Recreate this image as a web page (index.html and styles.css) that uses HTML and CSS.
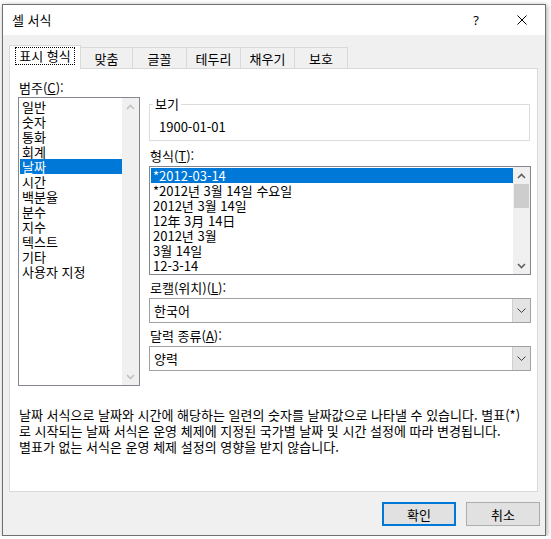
FILE: index.html
```html
<!DOCTYPE html>
<html lang="ko">
<head>
<meta charset="utf-8">
<title>셀 서식</title>
<link rel="stylesheet" href="styles.css">
</head>
<body>
<div class="window">
  <div class="titlebar">
    <span class="title">셀 서식</span>
    <span class="tb-btn help">?</span>
    <span class="tb-btn close"><svg width="10" height="10" viewBox="0 0 10 10"><path d="M0.5 0.5L9.5 9.5M9.5 0.5L0.5 9.5" fill="none" stroke="#000" stroke-width="1"/></svg></span>
  </div>
  <div class="tabs">
    <div class="tab active"><span class="focus">표시 형식</span></div>
    <div class="tab tab-align">맞춤</div>
    <div class="tab tab-font">글꼴</div>
    <div class="tab tab-border">테두리</div>
    <div class="tab tab-fill">채우기</div>
    <div class="tab tab-protect">보호</div>
  </div>
  <div class="panel">
    <div class="cols">
      <div class="left">
        <div class="label">범주(<u>C</u>):</div>
        <div class="listbox cat">
          <div class="items">
            <div class="item">일반</div>
            <div class="item">숫자</div>
            <div class="item">통화</div>
            <div class="item">회계</div>
            <div class="item sel">날짜</div>
            <div class="item">시간</div>
            <div class="item">백분율</div>
            <div class="item">분수</div>
            <div class="item">지수</div>
            <div class="item">텍스트</div>
            <div class="item">기타</div>
            <div class="item">사용자 지정</div>
          </div>
          <div class="scrollbar disabled">
            <div class="arrow"><svg width="9" height="6" viewBox="0 0 9 6"><path d="M1 5L4.5 1.5L8 5" fill="none" stroke="currentColor" stroke-width="1.6"/></svg></div>
            <div class="spacer"></div>
            <div class="arrow"><svg width="9" height="6" viewBox="0 0 9 6"><path d="M1 1L4.5 4.5L8 1" fill="none" stroke="currentColor" stroke-width="1.6"/></svg></div>
          </div>
        </div>
      </div>
      <div class="right">
        <fieldset class="sample">
          <legend>보기</legend>
          <div class="sample-value">1900-01-01</div>
        </fieldset>
        <div class="label fmt-label">형식(<u>T</u>):</div>
        <div class="listbox fmt">
          <div class="items">
            <div class="item sel">*2012-03-14</div>
            <div class="item">*2012년 3월 14일 수요일</div>
            <div class="item">2012년 3월 14일</div>
            <div class="item">12年 3月 14日</div>
            <div class="item">2012년 3월</div>
            <div class="item">3월 14일</div>
            <div class="item">12-3-14</div>
          </div>
          <div class="scrollbar">
            <div class="arrow"><svg width="9" height="6" viewBox="0 0 9 6"><path d="M1 5L4.5 1.5L8 5" fill="none" stroke="currentColor" stroke-width="1.6"/></svg></div>
            <div class="thumb"></div>
            <div class="spacer"></div>
            <div class="arrow"><svg width="9" height="6" viewBox="0 0 9 6"><path d="M1 1L4.5 4.5L8 1" fill="none" stroke="currentColor" stroke-width="1.6"/></svg></div>
          </div>
        </div>
        <div class="label combo-label">로캘(위치)(<u>L</u>):</div>
        <div class="combo">
          <span class="combo-text">한국어</span>
          <span class="combo-btn"><svg width="9" height="5" viewBox="0 0 9 5"><path d="M0.5 0.5L4.5 4.5L8.5 0.5" fill="none" stroke="#404040" stroke-width="1"/></svg></span>
        </div>
        <div class="label combo-label">달력 종류(<u>A</u>):</div>
        <div class="combo">
          <span class="combo-text">양력</span>
          <span class="combo-btn"><svg width="9" height="5" viewBox="0 0 9 5"><path d="M0.5 0.5L4.5 4.5L8.5 0.5" fill="none" stroke="#404040" stroke-width="1"/></svg></span>
        </div>
      </div>
    </div>
    <p class="desc">날짜 서식으로 날짜와 시간에 해당하는 일련의 숫자를 날짜값으로 나타낼 수 있습니다. 별표(*)<br>로 시작되는 날짜 서식은 운영 체제에 지정된 국가별 날짜 및 시간 설정에 따라 변경됩니다.<br>별표가 없는 서식은 운영 체제 설정의 영향을 받지 않습니다.</p>
  </div>
  <div class="buttons">
    <button class="btn default">확인</button>
    <button class="btn">취소</button>
  </div>
</div>
</body>
</html>
```
FILE: styles.css
```css
body {
  margin: 0;
  background: #fff;
  font-family: "Noto Sans CJK KR", "Noto Sans", sans-serif;
  font-size: 13px;
  color: #000;
}

.window {
  box-sizing: border-box;
  width: 544px;
  height: 532px;
  margin: 4px 0 0 2px;
  border: 1px solid #707070;
  background: #f0f0f0;
  box-shadow: 1px 1px 5px rgba(0, 0, 0, 0.35);
  display: flex;
  flex-direction: column;
}

.titlebar {
  height: 30px;
  flex: none;
  background: #fff;
  display: flex;
  align-items: center;
  padding-left: 9px;
}

.title {
  flex: 1;
  line-height: 16px;
}

.tb-btn {
  width: 46px;
  height: 30px;
  display: flex;
  align-items: center;
  justify-content: center;
}

.help {
  font-family: "Noto Sans", sans-serif;
  font-size: 13px;
}

.tabs {
  display: flex;
  align-items: flex-end;
  height: 23px;
  flex: none;
  margin: 10px 0 0 6px;
}

.tab {
  box-sizing: border-box;
  height: 21px;
  border-top: 1px solid #d9d9d9;
  border-right: 1px solid #d9d9d9;
  display: flex;
  align-items: center;
  justify-content: center;
  background: #f0f0f0;
  line-height: 15px;
}

.tab.active {
  width: 72px;
  height: 24px;
  margin-bottom: -1px;
  background: #fff;
  border: 1px solid #d9d9d9;
  border-bottom: none;
  position: relative;
  z-index: 1;
  align-items: flex-start;
  padding-top: 1px;
}

.tab-align { width: 52px; }
.tab-font { width: 54px; }
.tab-border { width: 54px; }
.tab-fill { width: 54px; }
.tab-protect { width: 53px; }

.focus {
  border: 1px dotted #000;
  padding: 0 3px;
  line-height: 16px;
}

.panel {
  box-sizing: border-box;
  width: 529px;
  height: 424px;
  flex: none;
  margin-left: 6px;
  background: #fff;
  border: 1px solid #d9d9d9;
  padding: 11px 0 0 8px;
}

.cols {
  display: grid;
  grid-template-columns: 122px 382px;
  column-gap: 9px;
  align-items: start;
}

.label {
  line-height: 15px;
  height: 15px;
  padding-left: 1px;
  white-space: nowrap;
}

.listbox {
  box-sizing: border-box;
  border: 1px solid #828790;
  background: #fff;
  display: flex;
}

.cat {
  height: 289px;
  margin-top: 2px;
}

.items {
  flex: 1;
  padding: 1px 0 0 1px;
}

.item {
  line-height: 15px;
  height: 15px;
  padding-left: 2px;
  white-space: nowrap;
}

.item.sel {
  background: #0078d7;
  color: #fff;
}

.scrollbar {
  width: 17px;
  background: #f0f0f0;
  display: flex;
  flex-direction: column;
  color: #606060;
}

.scrollbar.disabled {
  color: #c2c2c2;
}

.arrow {
  height: 17px;
  display: flex;
  align-items: center;
  justify-content: center;
}

.spacer {
  flex: 1;
}

.thumb {
  height: 24px;
  margin: 0 1px;
  background: #cdcdcd;
}

.right {
  padding-top: 17px;
  display: flex;
  flex-direction: column;
}

.sample {
  box-sizing: border-box;
  width: 381px;
  min-width: 0;
  margin: 0;
  padding: 0;
  border: 1px solid #dcdcdc;
}

.sample legend {
  padding: 0 2px;
  margin-left: 3px;
  line-height: 14px;
}

.sample-value {
  line-height: 15px;
  padding: 8px 0 6px 9px;
}

.fmt-label {
  margin-top: 7px;
}

.fmt {
  height: 109px;
  margin-top: 3px;
}

.combo-label {
  margin-top: 5px;
}

.combo {
  box-sizing: border-box;
  height: 25px;
  margin-top: 3px;
  border: 1px solid #a0a0a0;
  background: #fff;
  display: flex;
}

.combo-text {
  flex: 1;
  line-height: 23px;
  padding-left: 4px;
}

.combo-btn {
  width: 17px;
  background: #e3e3e3;
  border-left: 1px solid #cfcfcf;
  display: flex;
  align-items: center;
  justify-content: center;
}

.desc {
  margin: 21px 0 0;
  padding-left: 1px;
  line-height: 16px;
  white-space: nowrap;
}

.buttons {
  display: flex;
  justify-content: flex-end;
  gap: 10px;
  margin-top: 10px;
  padding-right: 5px;
}

.btn {
  box-sizing: border-box;
  width: 74px;
  height: 24px;
  padding: 0;
  background: #e1e1e1;
  border: 1px solid #adadad;
  font: inherit;
  color: #000;
}

.btn.default {
  border: 2px solid #0078d7;
}
```
